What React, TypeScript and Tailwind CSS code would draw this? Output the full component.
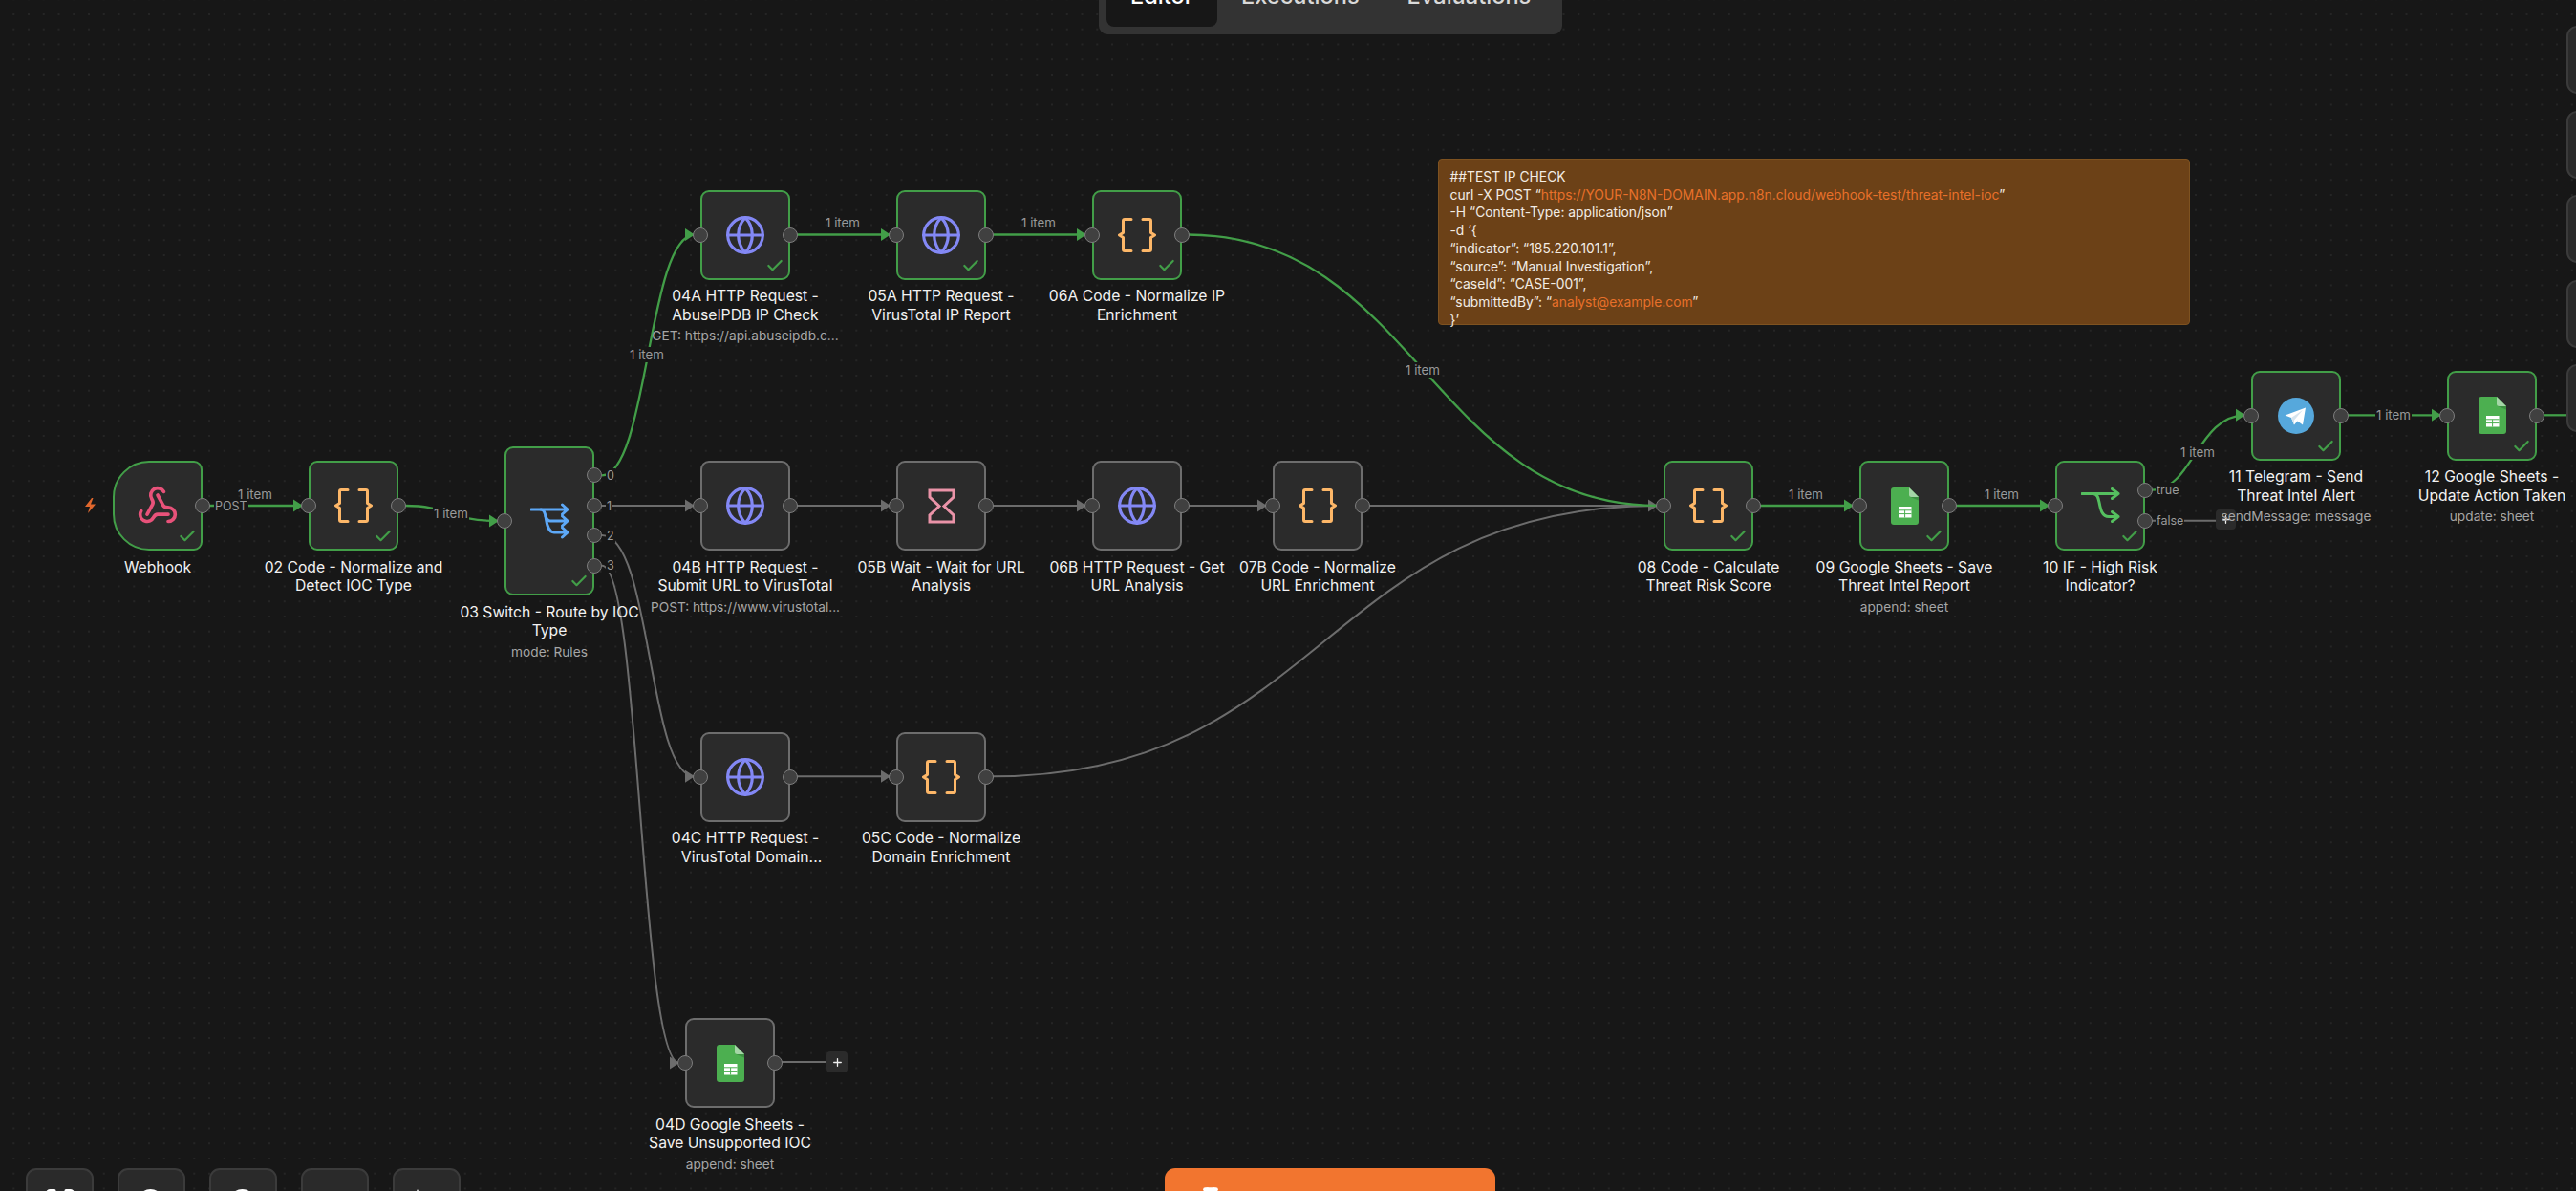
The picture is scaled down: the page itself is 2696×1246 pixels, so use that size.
import React from "react";
import { Check, FlaskConical, Globe, Maximize, Plus, Webhook, ZoomIn, ZoomOut } from "lucide-react";

const GREEN = "#429e48";
const GRAY = "#6c6c6c";

function Braces() {
  return (
    <svg width="40" height="36" viewBox="0 0 40 36" fill="none" stroke="#fdb768" strokeWidth="3" strokeLinecap="round" strokeLinejoin="round">
      <path d="M14 1.5H7A1.500 1.500 0 0 0 5.500 3v12.500L1.500 18l4 2.500V33A1.500 1.500 0 0 0 7 34.500h7" />
      <path d="M26 1.500h7A1.500 1.500 0 0 1 34.500 3v12.500l4 2.500-4 2.500V33a1.500 1.500 0 0 1-1.500 1.500h-7" />
    </svg>
  );
}

function Web() {
  return <Globe size={44} color="#8388f5" strokeWidth={1.75} />;
}

function Sheets() {
  return (
    <svg width="29" height="39" viewBox="0 0 29 39">
      <path d="M3 0H19L29 10V36a3 3 0 0 1-3 3H3a3 3 0 0 1-3-3V3a3 3 0 0 1 3-3Z" fill="#4caf50" />
      <path d="M19 9.500h10v4Z" fill="#3d9142" />
      <path d="M19 0L29 10H21.500A2.500 2.500 0 0 1 19 7.500Z" fill="#a5d6a7" />
      <rect x="8" y="20" width="13.500" height="11.500" fill="#fff" />
      <path d="M8 23.800h13.500M8 27.600h13.500M14.600 23.800v7.700" stroke="#4caf50" strokeWidth="1" />
    </svg>
  );
}

function SwitchIcon() {
  return (
    <svg width="41" height="38" viewBox="0 0 41 38" fill="none" stroke="#5da8f7" strokeWidth="3" strokeLinecap="round" strokeLinejoin="round">
      <path d="M1 7H39M33.500 2L39 7 33.500 12" />
      <path d="M11 7c4 0 4 4 5 7 1 3 2 5 5 5H39M33.500 14L39 19 33.500 24" />
      <path d="M16 14c1 6 2 17 9 17H39M33.500 26L39 31 33.500 36" />
    </svg>
  );
}

function IfIcon() {
  return (
    <svg width="41" height="38" viewBox="0 0 41 38" fill="none" stroke="#55bf5f" strokeWidth="3" strokeLinecap="round" strokeLinejoin="round">
      <path d="M1 6.500H39M32.500 1.500L39 6.500 32.500 11.500" />
      <path d="M12 6.500c5 0 6 4 7 9 1.500 8 3 15 10 15H39M32.500 25.500L39 30.500 32.500 35.500" />
    </svg>
  );
}

function Hourglass() {
  return (
    <svg width="29" height="37" viewBox="0 0 29 37" fill="none" stroke="#ea93a8" strokeWidth="3" strokeLinejoin="miter">
      <path d="M2 2H27V9L17 18.500 27 28V35H2V28L12 18.500 2 9Z" />
    </svg>
  );
}

function TelegramIcon() {
  return (
    <svg width="38" height="38" viewBox="0 0 38 38">
      <circle cx="19" cy="19" r="19" fill="#56a8dc" />
      <path d="M29 10.500L7.500 18.500 14 21 17 28.500 20.500 24.500 26 28.500Z" fill="#fff" />
      <path d="M14 21L26 13 17 23.500V28.500Z" fill="#d6e4ee" />
    </svg>
  );
}

function Tick() {
  return <Check size={20} color={GREEN} strokeWidth={2.6} className="absolute right-[4px] bottom-[3px]" />;
}

function Handle({ cls }: { cls: string }) {
  return <span className={`absolute z-20 h-[16px] w-[16px] rounded-full border-[1.5px] border-[#7d7d7d] bg-[#404040] ${cls}`} />;
}

function PortLabel({ cls, text }: { cls: string; text: string }) {
  return <span className={`absolute z-10 bg-[#171717] px-[1px] text-[12.5px] leading-[15px] text-[#9a9a9a] ${cls}`}>{text}</span>;
}

type NodeProps = {
  box: string;
  ok?: boolean;
  lines: string[];
  sub?: string;
  noOut?: boolean;
  noIn?: boolean;
  radius?: string;
  nudge?: string;
  children: React.ReactNode;
  ports?: React.ReactNode;
};

function Node({ box, ok, lines, sub, noOut, noIn, radius, nudge, children, ports }: NodeProps) {
  return (
    <div
      className={`absolute z-10 flex w-[94px] items-center justify-center border-2 bg-[#2b2b2b] ${ok ? "border-[#429e48]" : "border-[#6d6d6d]"} ${radius ?? "rounded-[9px]"} ${box}`}
    >
      {children}
      {ok && <Tick />}
      {!noIn && <Handle cls="left-[-10px] top-1/2 -translate-y-1/2" />}
      {!noOut && <Handle cls="right-[-10px] top-1/2 -translate-y-1/2" />}
      {ports}
      <div className="absolute left-1/2 top-full z-20 mt-[9.5px] w-max -translate-x-1/2 text-center">
        {lines.map((l, i) => (
          <div key={i} className={`text-[15.7px] leading-[19.6px] text-[#f2f2f2] ${i === 1 && nudge ? nudge : ""}`}>
            {l}
          </div>
        ))}
        {sub && <div className="mt-[4px] text-[13.7px] leading-[16px] text-[#a6a6a6]">{sub}</div>}
      </div>
    </div>
  );
}

function ItemLabel({ cls, text = "1 item", solid }: { cls: string; text?: string; solid?: boolean }) {
  return (
    <span
      className={`absolute z-[5] -translate-x-1/2 -translate-y-1/2 px-[1px] text-[13.3px] leading-[16px] text-[#999999] ${solid ? "bg-[#171717]" : ""} ${cls}`}
    >
      {text}
    </span>
  );
}

const greenPaths = [
  "M219 529H317",
  "M424 529C470 529 470 545 522 545",
  "M630 497.300C678 497.300 678 245.500 727 245.500",
  "M834 245.500H932",
  "M1039 245.500H1137",
  "M1243 245.500C1480 245.500 1500 529 1735 529",
  "M1842 529H1940",
  "M2047 529H2145",
  "M2252 512.700C2295 512.700 2300 434.300 2350 434.300",
  "M2457 434.300H2555",
  "M2662 434.300H2690",
];

const grayPaths = [
  "M630 529H727",
  "M834 529H932",
  "M1039 529H1137",
  "M1244 529H1326",
  "M1433 529H1735",
  "M630 560C682 560 678 812.300 727 812.300",
  "M834 812.300H932",
  "M630 591.700C670 591.700 670 1112 711 1112",
  "M1039 812.300C1386 812.300 1386 529 1735 529",
  "M818 1111H866",
  "M2252 544.700H2321",
];

const greenTips: [number, number][] = [
  [323, 529],
  [528, 545],
  [733, 245.5],
  [938, 245.5],
  [1143, 245.5],
  [1946, 529],
  [2151, 529],
  [2356, 434.3],
  [2561, 434.3],
];

const grayTips: [number, number][] = [
  [733, 529],
  [938, 529],
  [1143, 529],
  [1332, 529],
  [1741, 529],
  [733, 812.3],
  [938, 812.3],
  [717, 1112],
];

function Edges() {
  const tri = ([x, y]: [number, number]) => `${x - 16},${y - 6.5} ${x - 6},${y} ${x - 16},${y + 6.5}`;
  return (
    <svg width="2696" height="1246" viewBox="0 0 2696 1246" fill="none" className="absolute left-0 top-0">
      {grayPaths.map((d) => (
        <path key={d} d={d} stroke={GRAY} strokeWidth="2" />
      ))}
      {grayTips.map((t) => (
        <polygon key={t.join()} points={tri(t)} fill={GRAY} />
      ))}
      {greenPaths.map((d) => (
        <path key={d} d={d} stroke={GREEN} strokeWidth="2.3" />
      ))}
      {greenTips.map((t) => (
        <polygon key={t.join()} points={tri(t)} fill={GREEN} />
      ))}
    </svg>
  );
}

function Tabs() {
  const tab = "flex h-[40px] items-end px-[25px] pb-[19px] text-[23.6px] leading-[26px] font-medium";
  return (
    <div className="absolute left-[1150px] top-[-20px] z-30 flex rounded-b-[9px] bg-[#333333] p-[8px]">
      <div className={`${tab} rounded-[8px] bg-[#171717] text-white`}>Editor</div>
      <div className={`${tab} text-[#d9d9d9]`}>Executions</div>
      <div className={`${tab} text-[#d9d9d9]`}>Evaluations</div>
    </div>
  );
}

function RightRail() {
  const b = "h-[71px] w-[71px] rounded-[11px] border-2 border-[#3b3b3b] bg-[#2a2a2a]";
  return (
    <div className="absolute left-[2686px] top-[27px] z-30 flex flex-col gap-[17.500px]">
      <div className={b} />
      <div className={b} />
      <div className={b} />
      <div className={b} />
      <div className={b} />
    </div>
  );
}

function BottomBar() {
  const b = "flex h-[71px] w-[71px] justify-center rounded-[11px] border-2 border-[#3b3b3b] bg-[#2a2a2a] pt-[17px] text-white";
  return (
    <div className="absolute left-[27px] top-[1222px] z-30 flex gap-[25px]">
      <div className={b}>
        <Maximize size={36} strokeWidth={2} />
      </div>
      <div className={b}>
        <ZoomIn size={36} strokeWidth={2} />
      </div>
      <div className={b}>
        <ZoomOut size={36} strokeWidth={2} />
      </div>
      <div className={b} />
      <div className={b}>
        <svg width="36" height="36" viewBox="0 0 36 36" fill="#fff">
          <path d="M8 3l2.500 5.500L16 11l-5.500 2.500L8 19l-2.500-5.500L0 11l5.500-2.500Z" />
        </svg>
      </div>
    </div>
  );
}

export default function App() {
  return (
    <div className="relative h-[1246px] w-[2696px] overflow-hidden bg-[#171717] bg-[radial-gradient(circle,#333333_0.5px,transparent_0.9px)] bg-[length:15.75px_15.75px] bg-[position:6.4px_7.1px] font-['Inter',sans-serif]">
      <Edges />

      <svg width="13" height="16" viewBox="0 0 13 16" fill="#e0672d" className="absolute left-[88px] top-[521px]">
        <path d="M8 0L1 9H6L4 16 12 6.500H7L9.500 0Z" />
      </svg>

      <Node
        box="left-[118px] top-[482px] h-[94px]"
        radius="rounded-l-[38px] rounded-r-[9px]"
        ok
        noIn
        lines={["Webhook"]}
      >
        <Webhook size={44} color="#e8527a" strokeWidth={2} />
      </Node>
      <Node box="left-[323px] top-[482px] h-[94px]" ok lines={["02 Code - Normalize and", "Detect IOC Type"]}>
        <Braces />
      </Node>
      <Node
        box="left-[528px] top-[467px] h-[156px]"
        ok
        noOut
        lines={["03 Switch - Route by IOC", "Type"]}
        sub="mode: Rules"
        ports={
          <>
            <Handle cls="right-[-10px] top-[20.3px]" />
            <Handle cls="right-[-10px] top-[52px]" />
            <Handle cls="right-[-10px] top-[83px]" />
            <Handle cls="right-[-10px] top-[114.7px]" />
          </>
        }
      >
        <SwitchIcon />
      </Node>

      <Node box="left-[733px] top-[198.5px] h-[94px]" ok lines={["04A HTTP Request -", "AbuseIPDB IP Check"]} sub="GET: https://api.abuseipdb.c...">
        <Web />
      </Node>
      <Node box="left-[938px] top-[198.5px] h-[94px]" ok lines={["05A HTTP Request -", "VirusTotal IP Report"]}>
        <Web />
      </Node>
      <Node box="left-[1143px] top-[198.5px] h-[94px]" ok lines={["06A Code - Normalize IP", "Enrichment"]}>
        <Braces />
      </Node>

      <Node box="left-[733px] top-[482px] h-[94px]" lines={["04B HTTP Request -", "Submit URL to VirusTotal"]} sub="POST: https://www.virustotal...">
        <Web />
      </Node>
      <Node box="left-[938px] top-[482px] h-[94px]" lines={["05B Wait - Wait for URL", "Analysis"]}>
        <Hourglass />
      </Node>
      <Node box="left-[1143px] top-[482px] h-[94px]" lines={["06B HTTP Request - Get", "URL Analysis"]}>
        <Web />
      </Node>
      <Node box="left-[1332px] top-[482px] h-[94px]" lines={["07B Code - Normalize", "URL Enrichment"]}>
        <Braces />
      </Node>

      <Node box="left-[733px] top-[765.5px] h-[94px]" lines={["04C HTTP Request -", "VirusTotal Domain..."]} nudge="pl-[13px]">
        <Web />
      </Node>
      <Node box="left-[938px] top-[765.5px] h-[94px]" lines={["05C Code - Normalize", "Domain Enrichment"]}>
        <Braces />
      </Node>
      <Node box="left-[717px] top-[1065px] h-[94px]" lines={["04D Google Sheets -", "Save Unsupported IOC"]} sub="append: sheet">
        <Sheets />
      </Node>

      <Node box="left-[1741px] top-[482px] h-[94px]" ok lines={["08 Code - Calculate", "Threat Risk Score"]}>
        <Braces />
      </Node>
      <Node box="left-[1946px] top-[482px] h-[94px]" ok lines={["09 Google Sheets - Save", "Threat Intel Report"]} sub="append: sheet">
        <Sheets />
      </Node>
      <Node
        box="left-[2151px] top-[482px] h-[94px]"
        ok
        noOut
        lines={["10 IF - High Risk", "Indicator?"]}
        ports={
          <>
            <Handle cls="right-[-10px] top-[20.7px]" />
            <Handle cls="right-[-10px] top-[52.7px]" />
          </>
        }
      >
        <IfIcon />
      </Node>
      <Node box="left-[2356px] top-[387.5px] h-[94px]" ok lines={["11 Telegram - Send", "Threat Intel Alert"]} sub="sendMessage: message">
        <TelegramIcon />
      </Node>
      <Node box="left-[2561px] top-[387.5px] h-[94px]" ok lines={["12 Google Sheets -", "Update Action Taken"]} sub="update: sheet">
        <Sheets />
      </Node>

      <PortLabel cls="left-[224px] top-[521.5px]" text="POST" />
      <PortLabel cls="left-[634px] top-[489.8px]" text="0" />
      <PortLabel cls="left-[634px] top-[521.5px]" text="1" />
      <PortLabel cls="left-[634px] top-[552.5px]" text="2" />
      <PortLabel cls="left-[634px] top-[584.2px]" text="3" />
      <PortLabel cls="left-[2256px] top-[505.2px]" text="true" />
      <PortLabel cls="left-[2256px] top-[537.2px]" text="false" />

      <ItemLabel cls="left-[267px] top-[517px]" />
      <ItemLabel cls="left-[472px] top-[537px]" solid />
      <ItemLabel cls="left-[677px] top-[371px]" solid />
      <ItemLabel cls="left-[882px] top-[233px]" />
      <ItemLabel cls="left-[1087px] top-[233px]" />
      <ItemLabel cls="left-[1489px] top-[387px]" solid />
      <ItemLabel cls="left-[1890px] top-[517px]" />
      <ItemLabel cls="left-[2095px] top-[517px]" />
      <ItemLabel cls="left-[2300px] top-[473px]" solid />
      <ItemLabel cls="left-[2505px] top-[434px]" solid />

      <div className="absolute left-[865px] top-[1100px] z-[5] flex h-[22px] w-[22px] items-center justify-center rounded-[4px] bg-[#2b2b2b] text-[#eeeeee]">
        <Plus size={13} strokeWidth={2.4} />
      </div>
      <div className="absolute left-[2319px] top-[533px] z-[5] flex h-[21px] w-[21px] items-center justify-center rounded-[4px] bg-[#2b2b2b] text-[#eeeeee]">
        <Plus size={13} strokeWidth={2.4} />
      </div>

      <div className="absolute left-[1505px] top-[166px] z-[2] h-[174px] w-[787px] rounded-[4px] border border-[#7e5220] bg-[#6c4117] pl-[11.500px] pt-[9px] text-[13.85px] leading-[18.7px] text-[#f3ece4]">
        <div>##TEST IP CHECK</div>
        <div>
          curl -X POST “<span className="text-[#e8702a]">https://YOUR-N8N-DOMAIN.app.n8n.cloud/webhook-test/threat-intel-ioc</span>”
        </div>
        <div>-H “Content-Type: application/json”</div>
        <div>-d ‘{"{"}</div>
        <div>“indicator”: “185.220.101.1”,</div>
        <div>“source”: “Manual Investigation”,</div>
        <div>“caseId”: “CASE-001”,</div>
        <div>
          “submittedBy”: “<span className="text-[#e8702a]">analyst@example.com</span>”
        </div>
        <div>{"}"}’</div>
      </div>

      <Tabs />
      <RightRail />
      <BottomBar />

      <div className="absolute left-[1219px] top-[1222px] z-30 h-[70px] w-[346px] rounded-t-[11px] bg-[#f2752f] pl-[28px] pt-[19px] text-white">
        <FlaskConical size={40} strokeWidth={2.4} />
      </div>
    </div>
  );
}
